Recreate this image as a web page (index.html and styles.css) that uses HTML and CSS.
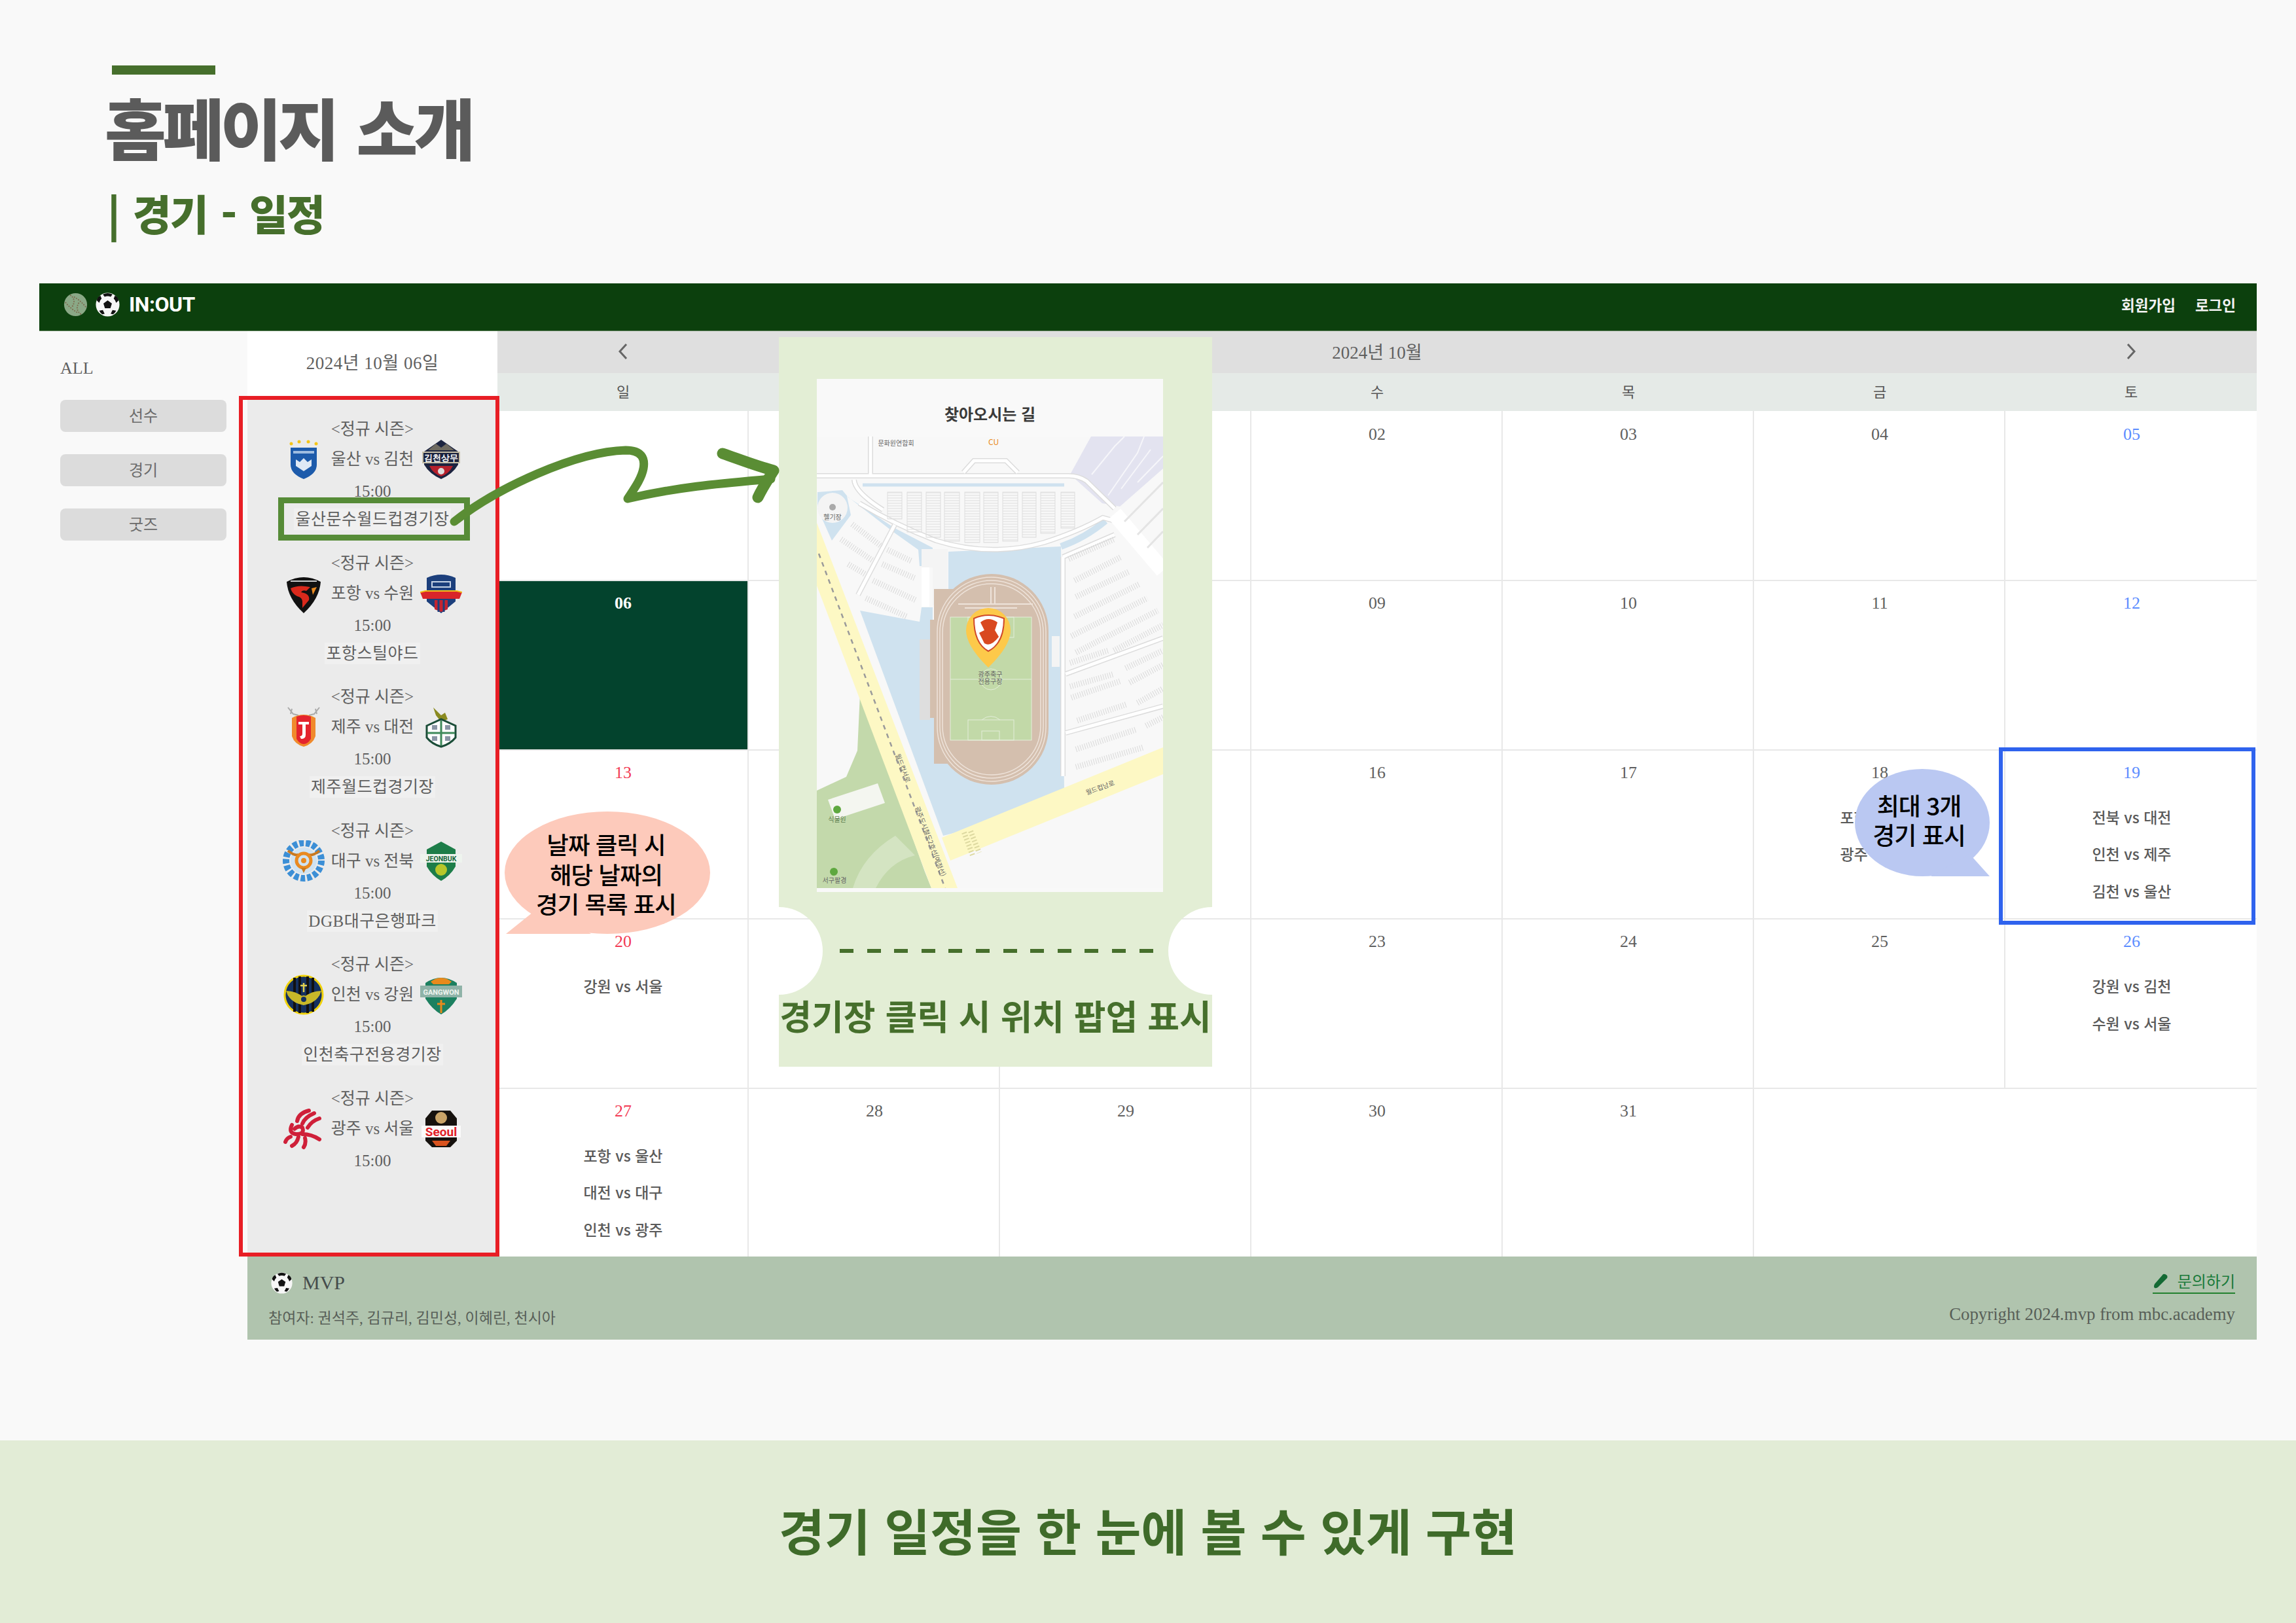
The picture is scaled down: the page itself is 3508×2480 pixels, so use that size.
FILE: index.html
```html
<!DOCTYPE html>
<html lang="ko">
<head>
  <meta charset="UTF-8" />
  <title>홈페이지 소개 | 경기 - 일정</title>
  <link rel="stylesheet" href="styles.css">
</head>
<body>
  <svg class="defs" width="0" height="0">
    <symbol id="ball" viewBox="0 0 40 40">
      <circle cx="20" cy="20" r="19.5" fill="#f6f6f6"/>
      <polygon points="20,13 27,18 24.500,26 15.500,26 13,18" fill="#111"/>
      <path d="M12 3 Q20 -1 28 3 L25 7 Q20 5 15 7Z M2 13 Q3 7 8 5 L10 10 Q7 13 6 17Z M38 13 Q37 7 32 5 L30 10 Q33 13 34 17Z M6 30 L12 29 L15 35 L11 36Q8 34 6 30Z M34 30 L28 29 L25 35 L29 36Q32 34 34 30Z" fill="#111"/>
    </symbol>
    <pattern id="stall" width="6" height="4" patternUnits="userSpaceOnUse">
      <path d="M0 2H6" stroke="#ddd" stroke-width="1"/>
    </pattern>
  </svg>

  <section class="intro">
    <div class="intro-bar"></div>
    <h1>홈페이지 소개</h1>
    <h2>| 경기 - 일정</h2>
  </section>

  <div class="app">
    <header class="topbar">
      <svg class="topbar-ball" viewBox="0 0 40 40">
        <circle cx="20" cy="20" r="19" fill="#8aa886"/>
        <path d="M11 4 Q22 12 14 24 M29 36 Q18 28 26 16 M3 16 Q12 27 23 33 M37 24 Q28 13 17 7" fill="none" stroke="#7d6a4e" stroke-width="2" stroke-dasharray="2 2"/>
      </svg>
      <svg class="topbar-ball"><use href="#ball"/></svg>
      <span class="brand">IN:OUT</span>
      <nav class="topbar-links">
        <a>회원가입</a>
        <a>로그인</a>
      </nav>
    </header>

    <div class="app-body">
      <aside class="sidebar">
        <div class="sidebar-all">ALL</div>
        <div class="side-btn">선수</div>
        <div class="side-btn">경기</div>
        <div class="side-btn">굿즈</div>
      </aside>

      <section class="matches">
        <div class="matches-date">2024년 10월 06일</div>
        <div class="matches-list">
          <div class="match">
            <div>&lt;정규 시즌&gt;</div>
            <div class="match-row">
              <svg class="crest" viewBox="0 0 64 64">
                <path d="M12 14H52V40Q52 54 32 62Q12 54 12 40Z" fill="#1d5bab"/>
                <path d="M20 32L26 36L32 30L38 36L44 32V42L32 50L20 42Z" fill="#dfe9f5"/>
                <path d="M16 19H48V23H16Z" fill="#9fbde0"/>
                <circle cx="13" cy="8" r="2.500" fill="#f5c518"/><circle cx="25" cy="5" r="2.500" fill="#f5c518"/>
                <circle cx="39" cy="5" r="2.500" fill="#f5c518"/><circle cx="51" cy="8" r="2.500" fill="#f5c518"/>
              </svg>
              <span>울산 vs 김천</span>
              <svg class="crest" viewBox="0 0 64 64">
                <path d="M6 20L32 2L58 20V40Q50 54 32 62Q14 54 6 40Z" fill="#1c2440"/>
                <path d="M12 18L24 8L32 14L40 8L52 18Z" fill="#6e6a60"/>
                <path d="M3 20H61V38H3Z" fill="#c8c0a8"/>
                <path d="M5 22H59V36H5Z" fill="#1c2440"/>
                <text class="crest-text" x="32" y="34" font-size="13" fill="#fff">김천상무</text>
                <path d="M14 42H50Q44 54 32 58Q20 54 14 42Z" fill="#b5202c"/>
                <circle cx="32" cy="50" r="5" fill="#dcdcdc"/>
              </svg>
            </div>
            <div>15:00</div>
            <div><span class="venue">울산문수월드컵경기장</span></div>
          </div>

          <div class="match">
            <div>&lt;정규 시즌&gt;</div>
            <div class="match-row">
              <svg class="crest" viewBox="0 0 64 64">
                <path d="M6 14Q32 0 58 14Q56 40 32 62Q8 40 6 14Z" fill="#111"/>
                <path d="M12 24Q24 18 42 22L36 28Q30 26 28 30Q42 32 40 42L30 54L30 44Q30 38 22 36Q14 32 12 24Z" fill="#d9291c"/>
                <path d="M44 24L52 22L46 34Z" fill="#e98a20"/>
                <path d="M12 13H52" stroke="#ccc" stroke-width="2"/>
              </svg>
              <span>포항 vs 수원</span>
              <svg class="crest" viewBox="0 0 64 64">
                <path d="M10 8Q32 -2 54 8V44L32 62L10 44Z" fill="#1c3f7c"/>
                <path d="M18 14H46V22H18Z" fill="none" stroke="#c5d2e5" stroke-width="2"/>
                <path d="M0 30L8 28H56L64 30L60 40H4Z" fill="#d9252a"/>
                <path d="M0 30L8 28H56L64 30" fill="none" stroke="#f2c118" stroke-width="2"/>
                <path d="M22 42H42V56L32 60L22 56Z" fill="#c42430"/>
                <path d="M28 42V60M36 42V60" stroke="#1c3f7c" stroke-width="3"/>
              </svg>
            </div>
            <div>15:00</div>
            <div><span class="venue">포항스틸야드</span></div>
          </div>

          <div class="match">
            <div>&lt;정규 시즌&gt;</div>
            <div class="match-row">
              <svg class="crest" viewBox="0 0 64 64">
                <path d="M8 2L16 12L24 14M56 2L48 12L40 14M14 4L12 12M50 4L52 12" fill="none" stroke="#aaa" stroke-width="2"/>
                <path d="M14 18Q32 8 50 18V46Q46 58 32 62Q18 58 14 46Z" fill="#f08a2c"/>
                <path d="M21 16Q32 12 43 16V50Q38 58 32 58Q26 58 21 50Z" fill="#e4242e"/>
                <path d="M24 24H40V28H35V44Q35 50 28 50L26 46Q30 46 30 42V28H24Z" fill="#fff"/>
              </svg>
              <span>제주 vs 대전</span>
              <svg class="crest" viewBox="0 0 64 64">
                <path d="M20 2L32 14L38 10L42 20L32 24L24 14Z" fill="#8a8a20"/>
                <path d="M10 30L32 20L54 30V48Q46 58 32 62Q18 58 10 48Z" fill="#fdfdfd" stroke="#1b4d38" stroke-width="3"/>
                <path d="M32 22V60M11 41H53" stroke="#3f8a5a" stroke-width="3"/>
                <rect x="18" y="29" width="8" height="7" fill="#8a95a5"/><rect x="38" y="29" width="8" height="7" fill="#8a95a5"/>
                <rect x="18" y="46" width="8" height="7" fill="#8a95a5"/><rect x="38" y="46" width="8" height="7" fill="#8a95a5"/>
              </svg>
            </div>
            <div>15:00</div>
            <div><span class="venue">제주월드컵경기장</span></div>
          </div>

          <div class="match">
            <div>&lt;정규 시즌&gt;</div>
            <div class="match-row">
              <svg class="crest" viewBox="0 0 64 64">
                <circle cx="32" cy="31" r="27" fill="none" stroke="#3c8fd6" stroke-width="10" stroke-dasharray="7 3"/>
                <circle cx="32" cy="31" r="20" fill="#cfe3f2"/>
                <path d="M8 16Q18 24 24 22M56 16Q46 24 40 22" fill="none" stroke="#c9791f" stroke-width="4"/>
                <circle cx="32" cy="31" r="11" fill="none" stroke="#e98a20" stroke-width="5"/>
                <circle cx="32" cy="31" r="4" fill="#e98a20"/>
                <path d="M28 42L32 50L36 42Z" fill="#c9791f"/>
              </svg>
              <span>대구 vs 전북</span>
              <svg class="crest" viewBox="0 0 64 64">
                <path d="M10 14L32 2L54 14V40Q46 54 32 62Q18 54 10 40Z" fill="#1d7d49"/>
                <path d="M0 21H64V34H0Z" fill="#eef4ee"/>
                <text class="crest-text" x="32" y="32" font-size="10.500" fill="#16663a">JEONBUK</text>
                <circle cx="32" cy="45" r="9" fill="#b7c62a"/>
              </svg>
            </div>
            <div>15:00</div>
            <div><span class="venue">DGB대구은행파크</span></div>
          </div>

          <div class="match">
            <div>&lt;정규 시즌&gt;</div>
            <div class="match-row">
              <svg class="crest" viewBox="0 0 64 64">
                <circle cx="32" cy="32" r="29" fill="#14305f" stroke="#f0d20c" stroke-width="3"/>
                <path d="M18 6V58M26 4V60M38 4V60M46 6V58" stroke="#111" stroke-width="4"/>
                <path d="M5 26Q20 26 32 36Q44 26 59 26Q54 44 32 48Q10 44 5 26Z" fill="#c8b829"/>
                <circle cx="32" cy="39" r="5" fill="#14305f" stroke="#c8b829" stroke-width="2"/>
                <path d="M32 14V28M27 18H37" stroke="#e0d050" stroke-width="2.500"/>
              </svg>
              <span>인천 vs 강원</span>
              <svg class="crest" viewBox="0 0 64 64">
                <path d="M8 14Q32 -2 56 14V38Q46 54 32 62Q18 54 8 38Z" fill="#1c8060"/>
                <path d="M16 12Q32 0 48 12L44 16H20Z" fill="#e88a1c"/>
                <path d="M0 18H64V36H0Z" fill="#8fb3a8"/>
                <text class="crest-text" x="32" y="32" font-size="11" fill="#eef4ee">GANGWON</text>
                <path d="M32 40V60M26 46H38" stroke="#e88a1c" stroke-width="3"/>
              </svg>
            </div>
            <div>15:00</div>
            <div><span class="venue">인천축구전용경기장</span></div>
          </div>

          <div class="match">
            <div>&lt;정규 시즌&gt;</div>
            <div class="match-row">
              <svg class="crest" viewBox="0 0 64 64">
                <g fill="none" stroke="#cf2039" stroke-width="6" stroke-linecap="round">
                  <path d="M40 4Q24 8 22 20M48 8Q34 14 30 24M56 16Q44 20 38 30"/>
                  <path d="M14 26Q8 38 20 40Q34 40 30 30Q24 26 18 32"/>
                  <path d="M30 40Q44 40 56 48M24 44Q22 54 14 58M34 46Q36 54 32 60M12 44Q6 46 4 52"/>
                </g>
              </svg>
              <span>광주 vs 서울</span>
              <svg class="crest" viewBox="0 0 64 64">
                <path d="M18 4H46L56 16V50L46 60H18L8 50V16Z" fill="#16120e"/>
                <circle cx="32" cy="15" r="9" fill="#c9a468"/>
                <path d="M2 27H62V45H2Z" fill="#fbfbfb"/>
                <text class="crest-text" x="32" y="43" font-size="19" font-weight="700" fill="#e22128">Seoul</text>
                <path d="M18 50H46L40 58H24Z" fill="#d9531e"/>
              </svg>
            </div>
            <div>15:00</div>
          </div>
        </div>
      </section>

      <section class="calendar">
        <div class="cal-nav">
          <svg class="chevron" viewBox="0 0 20 28"><path d="M15 3L5 14L15 25"/></svg>
          <span class="cal-title">2024년 10월</span>
          <svg class="chevron chevron-next" viewBox="0 0 20 28"><path d="M5 3L15 14L5 25"/></svg>
        </div>
        <div class="cal-week">
          <span>일</span><span>월</span><span>화</span><span>수</span><span>목</span><span>금</span><span>토</span>
        </div>
        <div class="cal-grid">
          <div class="day"></div>
          <div class="day"></div>
          <div class="day"><b class="num">01</b></div>
          <div class="day"><b class="num">02</b></div>
          <div class="day"><b class="num">03</b></div>
          <div class="day"><b class="num">04</b></div>
          <div class="day sat"><b class="num">05</b></div>

          <div class="day today"><b class="num">06</b></div>
          <div class="day"><b class="num">07</b></div>
          <div class="day"><b class="num">08</b></div>
          <div class="day"><b class="num">09</b></div>
          <div class="day"><b class="num">10</b></div>
          <div class="day"><b class="num">11</b></div>
          <div class="day sat"><b class="num">12</b></div>

          <div class="day sun"><b class="num">13</b></div>
          <div class="day"><b class="num">14</b></div>
          <div class="day"><b class="num">15</b></div>
          <div class="day"><b class="num">16</b></div>
          <div class="day"><b class="num">17</b></div>
          <div class="day"><b class="num">18</b>
            <p>포항 vs 수원</p><p>광주 vs 서울</p>
          </div>
          <div class="day sat"><b class="num">19</b>
            <p>전북 vs 대전</p><p>인천 vs 제주</p><p>김천 vs 울산</p>
          </div>

          <div class="day sun"><b class="num">20</b>
            <p>강원 vs 서울</p>
          </div>
          <div class="day"><b class="num">21</b></div>
          <div class="day"><b class="num">22</b></div>
          <div class="day"><b class="num">23</b></div>
          <div class="day"><b class="num">24</b></div>
          <div class="day"><b class="num">25</b></div>
          <div class="day sat"><b class="num">26</b>
            <p>강원 vs 김천</p><p>수원 vs 서울</p>
          </div>

          <div class="day sun"><b class="num">27</b>
            <p>포항 vs 울산</p><p>대전 vs 대구</p><p>인천 vs 광주</p>
          </div>
          <div class="day"><b class="num">28</b></div>
          <div class="day"><b class="num">29</b></div>
          <div class="day"><b class="num">30</b></div>
          <div class="day"><b class="num">31</b></div>
          <div class="day day-blank"></div>
          <div class="day day-blank"></div>
        </div>
      </section>

      <footer class="app-foot">
        <div class="foot-left">
          <div class="foot-brand"><svg class="foot-ball"><use href="#ball"/></svg>MVP</div>
          <div>참여자: 권석주, 김규리, 김민성, 이혜린, 천시아</div>
        </div>
        <div class="foot-right">
          <a class="foot-ask">
            <svg class="pencil" viewBox="0 0 24 24"><path d="M3 23Q1 21 3 17L16 2Q19 1 22 4Q23 6 22 8L8 22Q5 24 3 23Z"/></svg>
            문의하기
          </a>
          <div>Copyright 2024.mvp from mbc.academy</div>
        </div>
      </footer>
    </div>
  </div>

  <section class="summary">경기 일정을 한 눈에 볼 수 있게 구현</section>

  <!-- annotations over the screenshot -->
  <div class="mark mark-red"></div>
  <div class="mark mark-green"></div>
  <div class="mark mark-blue"></div>

  <div class="bubble bubble-pink">날짜 클릭 시<br>해당 날짜의<br>경기 목록 표시</div>
  <div class="bubble bubble-blue">최대 3개<br>경기 표시</div>

  <div class="ticket">
    <svg class="ticket-bg" viewBox="0 0 662 1115">
      <path d="M0 0H662V871A67 67 0 0 0 662 1005V1115H0V1005A67 67 0 0 0 0 871Z" fill="#e3eed5"/>
    </svg>
    <div class="map-panel">
      <div class="map-title">찾아오시는 길</div>
      <svg class="map" viewBox="0 0 529 690">
        <rect width="529" height="690" fill="#f8f8f8"/>
        <polygon points="387,58 419,0 529,0 529,49 463,107 436,102" fill="#e3e3f0"/>
        <path d="M420 58L455 15L470 0M445 90L490 25L500 0M465 80L510 20M490 70L529 30" fill="none" stroke="#f6f6fa" stroke-width="2"/>

        <!-- water -->
        <polygon points="201,176 373,168 378,538 217,604 193,610 66,266 157,283 160,261 177,261 177,283 178,300 201,260" fill="#cfe2ef"/>
        <polygon points="1,85 39,82 48,93 119,140 177,170 177,198 157,198 155,173 117,146 46,91 52,120 23,159 1,110" fill="#cfe2ef"/>
        <path d="M70 74H378" stroke="#cfe2ef" stroke-width="5"/>
        <path d="M373 168Q410 155 441 129" fill="none" stroke="#cfe2ef" stroke-width="10"/>
        <circle cx="24" cy="109" r="23" fill="#f4f4f4"/>
        <circle cx="24" cy="108" r="5" fill="#aaa"/>
        <text class="map-text" x="24" y="127">헬기장</text>

        <!-- white roads -->
        <g fill="none" stroke="#dcdcdc" stroke-width="8">
          <path d="M0 60H385Q400 60 412 68L455 110"/>
          <path d="M57 66Q58 85 101 112M65 102Q120 135 182 159Q265 185 347 162Q400 145 437 124L455 129"/>
          <path d="M224 55L240 37H289L307 55"/>
          <path d="M82 0V58"/>
          <path d="M119 135L63 242"/>
          <path d="M380 363L529 308M380 453L529 412M376 184V519M376 184L455 150"/>
        </g>
        <g fill="none" stroke="#fff" stroke-width="5">
          <path d="M0 60H385Q400 60 412 68L455 110"/>
          <path d="M57 66Q58 85 101 112M65 102Q120 135 182 159Q265 185 347 162Q400 145 437 124L455 129"/>
          <path d="M224 55L240 37H289L307 55"/>
          <path d="M82 0V58"/>
          <path d="M119 135L63 242"/>
          <path d="M380 363L529 308M380 453L529 412M376 184V519M376 184L455 150"/>
        </g>
        <path d="M455 118L529 205" fill="none" stroke="#fff" stroke-width="24"/>
        <path d="M470 130L529 70M490 150L529 110M505 170L529 145" fill="none" stroke="#e4e4e4" stroke-width="3"/>
        <polygon points="160,172 200,172 200,258 177,258 177,200 160,200" fill="#f4f4f4"/>
        <rect x="160" y="200" width="12" height="60" fill="#fff"/>

        <!-- parking stalls -->
        <g fill="url(#stall)" stroke="#ddd">
          <rect x="108" y="85" width="22" height="41"/><rect x="138" y="85" width="22" height="61"/>
          <rect x="167" y="85" width="22" height="69"/><rect x="195" y="85" width="23" height="75"/>
          <rect x="226" y="85" width="23" height="77"/><rect x="255" y="85" width="22" height="77"/>
          <rect x="284" y="85" width="23" height="75"/><rect x="314" y="85" width="21" height="69"/>
          <rect x="342" y="85" width="22" height="63"/><rect x="373" y="85" width="21" height="55"/>
        </g>
        <g class="hatch">
          <path d="M54 134L99 168M37 157L86 190M48 195L75 211M108 173L144 190M100 195L151 217M86 220L151 250M75 247L137 275"/>
          <path d="M385 187L454 157M394 220L465 184M396 245L478 206M394 275L494 225M389 305L505 247M396 330L521 266M387 346L445 327M454 327L529 288"/>
          <path d="M387 382L454 363M389 399L463 374M472 354L529 327M478 376L529 349M490 407L529 385M398 434L474 409M503 442L529 429M396 478L487 448M396 505L499 475"/>
        </g>

        <!-- stadium -->
        <rect x="157" y="310" width="16" height="123" fill="#dedede"/>
        <rect x="173" y="280" width="8" height="150" fill="#d4bfae"/>
        <rect x="359" y="305" width="12" height="47" fill="#f4f4f4"/>
        <rect x="179" y="233" width="50" height="267" fill="#d4bfae"/>
        <rect x="180" y="210" width="174" height="322" rx="87" fill="#d4bfae"/>
        <g fill="none" stroke="#eee3da" stroke-width="1.500">
          <rect x="184" y="215" width="166" height="312" rx="83"/>
          <rect x="188" y="220" width="158" height="302" rx="79"/>
          <rect x="192" y="225" width="150" height="292" rx="75"/>
        </g>
        <path d="M216 256H330M226 262H306M266 230V255M272 230V255" fill="none" stroke="#eee3da" stroke-width="2"/>
        <rect x="204" y="276" width="124" height="188" fill="#c2d9a8" stroke="#e3eed9"/>
        <g fill="none" stroke="#e3eed9" stroke-width="1">
          <path d="M204 371H328"/>
          <circle cx="266" cy="371" r="16"/>
          <rect x="231" y="433" width="70" height="31"/>
          <rect x="252" y="450" width="27" height="14"/>
          <path d="M252 433Q266 422 280 433"/>
          <rect x="231" y="276" width="70" height="31"/>
        </g>
        <path d="M262 353Q228 320 228 296A34 34 0 0 1 296 296Q296 320 262 353Z" fill="#fdc94a"/>
        <path d="M240 278Q262 268 286 278Q286 316 262 328Q240 316 240 278Z" fill="#fff" stroke="#d0492a" stroke-width="2"/>
        <path d="M250 284Q262 274 276 284L272 296L278 306Q266 322 256 316L248 300L256 296Z" fill="#d9481f"/>
        <text class="map-text" x="265" y="367">광주축구</text>
        <text class="map-text" x="265" y="378">전용구장</text>

        <!-- roads and green -->
        <polygon points="0,541 45,520 62,480 66,393 70,400 165,665 175,690 0,690" fill="#c3d9ab"/>
        <path d="M55 690Q70 640 120 610L150 640Q110 650 90 690Z" fill="#d4e4c2"/>
        <polygon points="17,555 93,530 104,560 28,585" fill="#f4f6f0"/>
        <polygon points="191,613 529,475 529,516 204,648" fill="#fdf8c4"/>
        <polygon points="0,132 215,690 175,690 0,228" fill="#fdf8c4"/>
        <path d="M3 179L196 690" fill="none" stroke="#9a9a9a" stroke-width="2.500" stroke-dasharray="7 7"/>
        <path d="M225 605L238 640M235 603L248 636" fill="none" stroke="#ddd9a0" stroke-width="8" stroke-dasharray="2 3"/>
        <circle cx="31" cy="570" r="6" fill="#5ea83f"/>
        <circle cx="26" cy="665" r="6" fill="#5ea83f"/>
        <text class="map-text map-text-green" x="31" y="589">식물원</text>
        <text class="map-text" x="27" y="682">서구팔경</text>
        <text class="map-text" x="121" y="14">문화원연합회</text>
        <text class="map-text map-text-cu" x="270" y="13">CU</text>
        <text class="map-text" transform="translate(434 540) rotate(-20)">월드컵남로</text>
        <text class="map-text" transform="translate(128 508) rotate(69)">월드컵서로</text>
        <text class="map-text" transform="translate(170 620) rotate(69)">광주도시철도2호선(예정선)</text>
      </svg>
    </div>
    <div class="ticket-dash"></div>
    <div class="ticket-label">경기장 클릭 시 위치 팝업 표시</div>
  </div>

  <svg class="arrow" viewBox="0 0 3508 2480">
    <g fill="none" stroke="#5a8d34" stroke-linecap="round" stroke-linejoin="round">
      <path stroke-width="13" d="M694 797C760 745 880 690 956 688C980 688 986 700 983 716C980 732 968 748 959 762C1040 743 1110 738 1178 732"/>
      <path stroke-width="17" d="M1104 693C1130 702 1155 712 1182 719C1172 735 1165 745 1158 760"/>
    </g>
  </svg>
</body>
</html>
```

FILE: styles.css
```css
* {
  box-sizing: border-box;
}

body {
  position: relative;
  width: 3508px;
  height: 2480px;
  margin: 0;
  overflow: hidden;
  background: #f9f9f9;
  font-family: "Liberation Serif", "Noto Sans CJK KR", serif;
  color: #5f5f5f;
}

.defs {
  position: absolute;
}

/* title block */
.intro {
  height: 433px;
  padding: 100px 0 0 160px;
  font-family: "Noto Sans CJK KR", sans-serif;
}

.intro-bar {
  width: 158px;
  height: 14px;
  margin-left: 11px;
  background: #466f2c;
}

.intro h1 {
  margin: 20px 0 0;
  font-size: 102px;
  line-height: 118px;
  font-weight: 900;
  letter-spacing: -5.5px;
  word-spacing: 8px;
  color: #5b5b5b;
}

.intro h2 {
  margin: 34px 0 0 4px;
  font-size: 64px;
  line-height: 76px;
  font-weight: 800;
  letter-spacing: -2px;
  word-spacing: 5px;
  color: #466f2c;
}

/* app frame */
.app {
  margin: 0 60px;
}

.topbar {
  display: flex;
  align-items: center;
  gap: 12px;
  height: 73px;
  padding: 0 32px 8px 37px;
  background: #0c400d;
  border-bottom: 1px solid #5d7f58;
}

.topbar-ball {
  width: 37px;
  height: 37px;
}

.brand {
  margin-left: 2px;
  font-family: Roboto, sans-serif;
  font-size: 32px;
  font-weight: 700;
  letter-spacing: -0.5px;
  color: #fff;
}

.topbar-links {
  display: flex;
  gap: 30px;
  margin-left: auto;
  font-family: "Noto Sans CJK KR", sans-serif;
  font-size: 22.5px;
  font-weight: 700;
  color: #f2f2f2;
}

.app-body {
  display: grid;
  grid-template-columns: 318px 382px 1fr;
  grid-template-rows: 1414px 127px;
}

.sidebar {
  grid-row: 1 / 3;
  padding: 42px 32px 0;
}

.sidebar-all {
  font-size: 26px;
  line-height: 30px;
  margin-bottom: 33px;
}

.side-btn {
  height: 49px;
  margin-bottom: 34px;
  border-radius: 8px;
  background: #dcdcdc;
  text-align: center;
  line-height: 50px;
  font-size: 24px;
  color: #6b6b6b;
}

/* match list */
.matches {
  display: flex;
  flex-direction: column;
  background: #fff;
}

.matches-date {
  height: 100px;
  padding-top: 30px;
  text-align: center;
  font-size: 27px;
  letter-spacing: 0.5px;
  line-height: 38px;
}

.matches-list {
  flex: 1;
  background: #ebebeb;
  text-align: center;
  font-size: 25px;
  line-height: 42px;
}

.match {
  height: 204.5px;
  padding-top: 29px;
}

.match > div:first-child {
  line-height: 42px;
  margin-bottom: -4px;
}

.match > div:nth-child(3) {
  line-height: 44px;
}

.match-row {
  display: flex;
  align-items: center;
  justify-content: space-between;
  width: 274px;
  height: 58px;
  margin: 0 auto -2px;
}

.crest {
  width: 64px;
  height: 64px;
  flex: none;
}

.crest-text {
  font-family: Roboto, sans-serif;
  font-weight: 700;
  text-anchor: middle;
}

.venue {
  background: #f0f0f0;
  padding: 3px 2px;
  letter-spacing: 0.5px;
}

/* calendar */
.calendar {
  display: flex;
  flex-direction: column;
  background: #fff;
}

.cal-nav,
.cal-week {
  display: grid;
  grid-template-columns: repeat(7, 384px);
  align-items: center;
  justify-items: center;
}

.cal-nav {
  height: 64px;
  padding-bottom: 2px;
  background: #dfdfdf;
  font-size: 27px;
}

.cal-title {
  grid-column: 4;
}

.chevron {
  width: 20px;
  height: 28px;
}

.chevron path {
  fill: none;
  stroke: #666;
  stroke-width: 3;
}

.chevron-next {
  grid-column: 7;
}

.cal-week {
  height: 58px;
  padding-bottom: 3px;
  background: #e5eae7;
  font-family: "Noto Sans CJK KR", sans-serif;
  font-size: 22px;
  color: #555;
}

.cal-grid {
  flex: 1;
  display: grid;
  grid-template-columns: repeat(7, 384px);
  grid-template-rows: repeat(5, 1fr);
}

.day {
  border-right: 2px solid #e8e8e8;
  border-top: 2px solid #e8e8e8;
  padding: 20px 0 0 2px;
  text-align: center;
}

.day:nth-child(7n) {
  border-right: 0;
}

.day:nth-child(-n+7) {
  border-top: 0;
  padding-top: 22px;
}

.day-blank {
  border-right: 0;
}

.num {
  display: block;
  height: 56px;
  margin-bottom: 11px;
  font-size: 26px;
  line-height: 28px;
  font-weight: 400;
}

.day p {
  margin: 0;
  height: 56.5px;
  font-family: "Noto Sans CJK KR", sans-serif;
  font-size: 23px;
  line-height: 28px;
  font-weight: 500;
  color: #5a5a5a;
}

.sat .num {
  color: #5b8cff;
}

.sun .num {
  color: #f23b55;
}

.today {
  background: #03432d;
}

.today .num {
  color: #fff;
  font-weight: 700;
}

/* app footer */
.app-foot {
  grid-column: 2 / 4;
  display: flex;
  justify-content: space-between;
  padding: 18px 33px 0 32px;
  background: #b0c4ae;
  font-size: 26.8px;
  color: #585f58;
}

.foot-left {
  font-size: 23px;
}

.foot-brand {
  display: flex;
  align-items: center;
  gap: 15px;
  height: 44px;
  margin-bottom: 13px;
  font-size: 30px;
  color: #454c4c;
}

.foot-ball {
  width: 33px;
  height: 33px;
  margin-left: 4px;
}

.foot-right {
  display: flex;
  flex-direction: column;
  align-items: flex-end;
}

.foot-ask {
  display: flex;
  align-items: center;
  gap: 14px;
  height: 39px;
  margin-bottom: 16px;
  border-bottom: 2px solid #23812f;
  font-family: "Noto Sans CJK KR", sans-serif;
  font-size: 24px;
  color: #1a7a3a;
}

.pencil {
  width: 24px;
  height: 26px;
  fill: #146a34;
}

/* bottom band */
.summary {
  display: flex;
  align-items: center;
  justify-content: center;
  position: absolute;
  left: 0;
  right: 0;
  top: 2201px;
  height: 279px;
  padding-bottom: 8px;
  background: #e2ecd6;
  font-family: "Noto Sans CJK KR", sans-serif;
  font-size: 76px;
  font-weight: 700;
  color: #3f6b2a;
}

/* annotations */
.mark {
  position: absolute;
  border-style: solid;
}

.mark-red {
  left: 365px;
  top: 605px;
  width: 398px;
  height: 1315px;
  border-width: 6px;
  border-color: #e81e25;
}

.mark-green {
  left: 425px;
  top: 760px;
  width: 293px;
  height: 66px;
  border-width: 9px;
  border-color: #568b37;
}

.mark-blue {
  left: 3054px;
  top: 1142px;
  width: 392px;
  height: 271px;
  border-width: 6px;
  border-color: #2f63ee;
}

.bubble {
  position: absolute;
  z-index: 1;
  display: flex;
  align-items: center;
  justify-content: center;
  border-radius: 50%;
  text-align: center;
  font-family: "Noto Sans CJK KR", sans-serif;
  font-weight: 500;
  color: #000;
}

.bubble::after {
  content: "";
  position: absolute;
  z-index: -1;
  background: inherit;
}

.bubble-pink {
  left: 771px;
  top: 1240px;
  width: 314px;
  height: 187px;
  padding: 4px 4px 0 0;
  background: #fdcabb;
  font-size: 36.5px;
  line-height: 45.5px;
  letter-spacing: -1px;
}

.bubble-pink::after {
  left: 2px;
  top: 140px;
  width: 130px;
  height: 47px;
  clip-path: polygon(0 100%, 45% 0, 100% 100%);
}

.bubble-blue {
  left: 2834px;
  top: 1175px;
  width: 206px;
  height: 164px;
  padding: 0 10px 8px 0;
  background: #bac8f2;
  font-size: 37px;
  line-height: 45px;
  letter-spacing: -1px;
}

.bubble-blue::after {
  right: 0;
  top: 130px;
  width: 90px;
  height: 34px;
  clip-path: polygon(100% 100%, 66% 0, 0 100%);
}

/* location popup */
.ticket {
  position: absolute;
  z-index: 1;
  left: 1190px;
  top: 515px;
  width: 662px;
  height: 1115px;
  display: flex;
  flex-direction: column;
}

.ticket-bg {
  position: absolute;
  inset: 0;
  z-index: -1;
}

.map-panel {
  width: 529px;
  height: 784px;
  margin: 64px 0 0 58px;
  background: #f9f9f9;
}

.map-title {
  height: 88px;
  padding-top: 36px;
  text-align: center;
  font-family: "Noto Sans CJK KR", sans-serif;
  font-size: 24px;
  line-height: 34px;
  font-weight: 700;
  color: #3a3a3a;
}

.map {
  display: block;
  width: 529px;
  height: 690px;
}

.hatch {
  fill: none;
  stroke: #d8d8d8;
  stroke-width: 9;
  stroke-dasharray: 1 2.5;
}

.map-text {
  font-family: "Noto Sans CJK KR", sans-serif;
  font-size: 10px;
  fill: #666;
  text-anchor: middle;
}

.map-text-cu {
  fill: #e98a20;
  font-size: 12px;
}

.map-text-green {
  fill: #5e7f50;
}

.ticket-dash {
  width: 480px;
  height: 6px;
  margin: 87px 0 0 93px;
  background: repeating-linear-gradient(90deg, #466f2c 0 21px, transparent 21px 41.6px);
}

.ticket-label {
  margin-top: 60px;
  text-align: center;
  font-family: "Noto Sans CJK KR", sans-serif;
  font-size: 53px;
  line-height: 70px;
  font-weight: 700;
  white-space: nowrap;
  color: #466f2c;
}

.arrow {
  position: absolute;
  z-index: 2;
  left: 0;
  top: 0;
  width: 3508px;
  height: 2480px;
  pointer-events: none;
}
```
